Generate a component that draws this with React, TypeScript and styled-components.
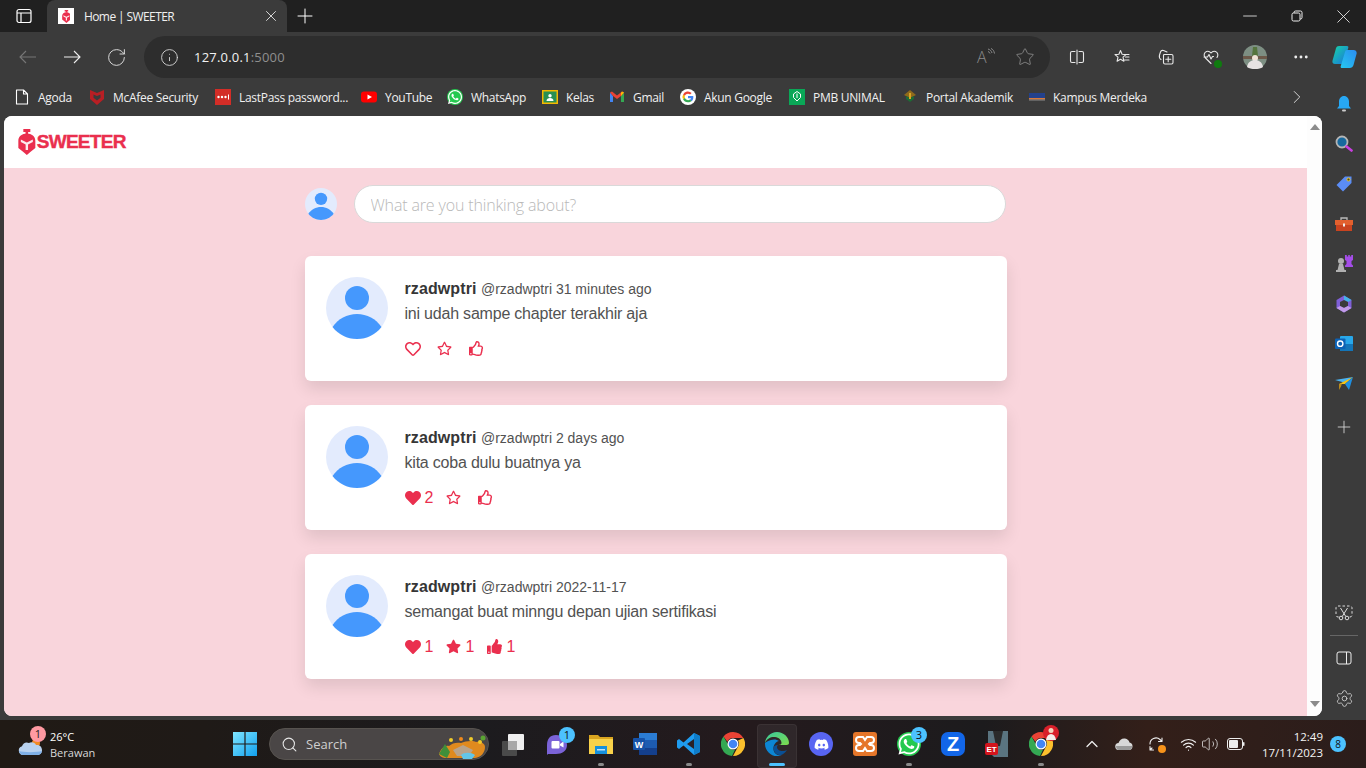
import styled, { createGlobalStyle } from "styled-components"
import {
  RotateCw, Info, Star, Plus, X, Minus, ChevronRight, ChevronUp, Search,
  Wifi, Volume2, Settings, Ellipsis,
} from "lucide-react"
import { FaHeart, FaRegHeart, FaStar, FaRegStar, FaThumbsUp, FaRegThumbsUp, FaWhatsapp, FaDiscord } from "react-icons/fa"

const RED = "#ea2f4e"

const GlobalStyle = createGlobalStyle`
  html, body { margin: 0; padding: 0; background: #3b3b3b; overflow: hidden; }
  * { box-sizing: border-box; }
`

/* ---------- drawn icons ---------- */

function Helmet({ size }: { size: number }) {
  return (
    <svg width={size * 0.68} height={size} viewBox="0 0 17 26">
      <path d="M5 0h7v3H9.800v2H7.200V3H5z" fill={RED} />
      <path d="M8.500 4.500c4.800 0 8.500 2.800 8.500 7.500v7l-5 4-3.500 3-3.500-3-5-4v-7c0-4.700 3.700-7.500 8.500-7.500z" fill={RED} />
      <path d="M2.500 10.500l6 3 6-3v2.500l-4.800 2.500V21H7.300v-5.500L2.500 13z" fill="#fff" opacity=".9" />
    </svg>
  )
}

function Avatar({ size }: { size: number }) {
  return (
    <svg width={size} height={size} viewBox="0 0 62 62">
      <circle cx="31" cy="31" r="31" fill="#e3ebfd" />
      <circle cx="31" cy="21" r="12" fill="#4598fd" />
      <path d="M6.500 50C12 42 21 37 31 37s19 5 24.500 13C49.500 57.500 41 62 31 62S12.500 57.500 6.500 50z" fill="#4598fd" />
    </svg>
  )
}

function ChromeLogo({ size }: { size: number }) {
  return (
    <svg width={size} height={size} viewBox="0 0 24 24">
      <path d="M12 0a12 12 0 0 1 10.400 6H12a6 6 0 0 0-5.600 3.800L2.500 4.600A12 12 0 0 1 12 0z" fill="#ea4335" />
      <path d="M22.400 6A12 12 0 0 1 12 24l4.700-8.700A6 6 0 0 0 17 8.400z" fill="#fbc02d" />
      <path d="M2.500 4.600l5 8.600a5 5 0 0 0 6.500 4.500L11 24A12 12 0 0 1 2.500 4.600z" fill="#34a853" />
      <circle cx="12" cy="12" r="5.500" fill="#fff" />
      <circle cx="12" cy="12" r="4.300" fill="#4285f4" />
    </svg>
  )
}

function GoogleLogo() {
  return (
    <svg width="16" height="16" viewBox="0 0 24 24">
      <circle cx="12" cy="12" r="12" fill="#fff" />
      <path d="M20 12.200c0-.6-.1-1.100-.2-1.700H12v3.200h4.500a3.900 3.900 0 0 1-1.700 2.500l2.700 2.100c1.600-1.400 2.500-3.500 2.500-6.100z" fill="#4285f4" />
      <path d="M12 20c2.200 0 4-.7 5.500-2l-2.700-2.100c-.7.500-1.700.8-2.800.8-2.100 0-3.900-1.400-4.600-3.400L4.600 15.500A8 8 0 0 0 12 20z" fill="#34a853" />
      <path d="M7.400 13.300a4.800 4.800 0 0 1 0-3L4.600 8.200a8 8 0 0 0 0 7.300z" fill="#fbbc05" />
      <path d="M12 7.200c1.200 0 2.300.4 3.100 1.200l2.400-2.400A8 8 0 0 0 4.600 8.200l2.800 2.100C8.100 8.600 9.900 7.200 12 7.200z" fill="#ea4335" />
    </svg>
  )
}

function EdgeLogo() {
  return (
    <svg width="24" height="24" viewBox="0 0 24 24">
      <defs>
        <linearGradient id="edgeA" x1="0" y1="0" x2="1" y2="1">
          <stop offset="0" stopColor="#36c9a0" />
          <stop offset="1" stopColor="#7fdc4c" />
        </linearGradient>
      </defs>
      <path d="M12 0C5.500 0 .5 5 0 11c2-5 6.500-6.500 10-6 4 .5 6.500 3 6.500 6 0 1-1 2-3 2h8c1.500 0 2.500-1 2.500-2C24 5 18.500 0 12 0z" fill="url(#edgeA)" />
      <path d="M0 11c-.3 7 5 13 12 13 2 0 3.500-.3 5-1-3.500 1-8-1-8.500-5.500C8 13 11 9.500 14 9c-2-1.500-5-2-8-1C3 9 1 10 0 11z" fill="#0c86d4" />
      <path d="M8.500 16c0 4 3 7 7 7.200 2.500-.7 5-2.700 6.500-5.500-1 .8-2.500 1.300-4.500 1.300-3 0-5.500-1.500-5.500-4 0-.8.300-1.500 1-2-2.500 0-4.500 1-4.500 3z" fill="#0a4f94" />
    </svg>
  )
}

function Copilot() {
  return (
    <svg width="25" height="24" viewBox="0 0 25 24">
      <defs>
        <linearGradient id="copA" x1="0" y1="0" x2="1" y2="1">
          <stop offset="0" stopColor="#17d6a5" />
          <stop offset="1" stopColor="#1b6fe0" />
        </linearGradient>
        <linearGradient id="copB" x1="1" y1="0" x2="0" y2="1">
          <stop offset="0" stopColor="#2b8cf0" />
          <stop offset="1" stopColor="#25c8f0" />
        </linearGradient>
      </defs>
      <path d="M7 1h8c1 0 1.600.8 1.300 1.800L12 17c-.4 1.200-1.500 2-2.800 2H3c-2 0-3-1.500-2.500-3.300L4 3.200C4.400 1.800 5.500 1 7 1z" fill="url(#copA)" />
      <path d="M15 5h6.500c2.300 0 3.700 1.800 3 4l-3 11c-.5 2-2 3-3.800 3H10c-1 0-1.600-.8-1.300-1.800L13 7c.3-1.200 1-2 2-2z" fill="url(#copB)" />
    </svg>
  )
}

function Line({ d, size = 16, color = "#e8e8e8", fill = "none" }: { d: string; size?: number; color?: string; fill?: string }) {
  return (
    <svg width={size} height={size} viewBox="0 0 16 16">
      <path d={d} fill={fill} stroke={color} strokeWidth="1.100" strokeLinejoin="round" strokeLinecap="round" />
    </svg>
  )
}

function NavArrow({ color, back }: { color: string; back?: boolean }) {
  return (
    <svg width="18" height="14" viewBox="0 0 18 14">
      <path d={back ? "M17 7H1M7 1L1 7l6 6" : "M1 7h16M11 1l6 6-6 6"} fill="none" stroke={color} strokeWidth="1.100" />
    </svg>
  )
}

function GreenBubble({ size }: { size: number }) {
  return (
    <GreenBadge $size={size}>
      <FaWhatsapp size={size} color="#fff" />
    </GreenBadge>
  )
}

const bookmarks = [
  { label: "Agoda", w: 75, icon: <Line d="M2.500 1h7l4 4v10h-11zM9.500 1v4h4" color="#fff" /> },
  {
    label: "McAfee Security", w: 126,
    icon: <svg width="16" height="16" viewBox="0 0 16 16"><path d="M1 1l7 3 7-3v9l-7 6-7-6z" fill="#b81f24" /><path d="M4.500 5.500L8 7l3.500-1.500v3.300L8 11.500 4.500 8.800z" fill="#3b3b3b" /></svg>,
  },
  {
    label: "LastPass password...", w: 146,
    icon: <svg width="16" height="16" viewBox="0 0 16 16"><rect width="16" height="16" fill="#d32d27" /><circle cx="3.500" cy="8" r="1.200" fill="#fff" /><circle cx="7" cy="8" r="1.200" fill="#fff" /><circle cx="10.500" cy="8" r="1.200" fill="#fff" /><rect x="13" y="5.500" width="1" height="5" fill="#fff" /></svg>,
  },
  {
    label: "YouTube", w: 86,
    icon: <svg width="16" height="16" viewBox="0 0 16 16"><rect y="2.500" width="16" height="11" rx="3" fill="#f00" /><path d="M6.500 5.500L11 8l-4.500 2.500z" fill="#fff" /></svg>,
  },
  { label: "WhatsApp", w: 95, icon: <GreenBubble size={16} /> },
  {
    label: "Kelas", w: 67,
    icon: <svg width="16" height="16" viewBox="0 0 16 16"><rect y="1" width="16" height="14" fill="#f5b800" /><rect x="1.500" y="2.500" width="13" height="11" fill="#2a8f52" /><circle cx="8" cy="6.800" r="1.700" fill="#fff" /><path d="M4.500 12c0-2 1.500-3 3.500-3s3.500 1 3.500 3z" fill="#fff" /></svg>,
  },
  {
    label: "Gmail", w: 71,
    icon: <svg width="16" height="16" viewBox="0 0 16 16"><path d="M1 3.500V13h3V7z" fill="#4285f4" /><path d="M15 3.500V13h-3V7z" fill="#34a853" /><path d="M1 3.500L3 2.500 8 6.500l5-4 2 1L12 7 8 10 4 7z" fill="#ea4335" /><path d="M12 3.700l1-1.200 2 1L12 7z" fill="#fbbc05" /></svg>,
  },
  { label: "Akun Google", w: 109, icon: <GoogleLogo /> },
  {
    label: "PMB UNIMAL", w: 113,
    icon: <svg width="16" height="16" viewBox="0 0 16 16"><rect width="16" height="16" fill="#0aa757" /><path d="M8 2.500l3.500 2.500v3.500L8 12 4.500 8.500V5z" fill="none" stroke="#fff" /><path d="M8 4.500v4.500" stroke="#fff" /></svg>,
  },
  {
    label: "Portal Akademik", w: 127,
    icon: <svg width="16" height="16" viewBox="0 0 16 16"><path d="M8 1l6 5-6 3-6-3z" fill="#8f6a1c" /><path d="M4 7l4 2 4-2v3l-4 3-4-3z" fill="#1e6b35" /><path d="M7 4h2v6H7z" fill="#d9a520" /></svg>,
  },
  {
    label: "Kampus Merdeka", w: 120,
    icon: <svg width="16" height="16" viewBox="0 0 16 16"><rect y="4" width="16" height="5" fill="#23418c" /><rect y="9" width="16" height="1.500" fill="#d9793a" /><rect y="10.500" width="16" height="1" fill="#8b8b8b" /></svg>,
  },
]

/* ---------- posts data ---------- */

const posts = [
  { when: "31 minutes ago", text: "ini udah sampe chapter terakhir aja", likes: 0, stars: 0, thumbs: 0 },
  { when: "2 days ago", text: "kita coba dulu buatnya ya", likes: 2, stars: 0, thumbs: 0 },
  { when: "2022-11-17", text: "semangat buat minngu depan ujian sertifikasi", likes: 1, stars: 1, thumbs: 1 },
]

function Action({ on, off, count }: { on: React.ReactNode; off: React.ReactNode; count: number }) {
  return (
    <ActionButton $hasCount={count > 0}>
      <ActionIcon>{count > 0 ? on : off}</ActionIcon>
      {count > 0 && <Count>{count}</Count>}
    </ActionButton>
  )
}

function App() {
  return (
    <Screen>
      <GlobalStyle />

      <TabStrip>
        <StripButton $w={47}>
          <svg width="16" height="16" viewBox="0 0 16 16">
            <rect x="1" y="1.500" width="14" height="13" rx="2" fill="none" stroke="#fff" strokeWidth="1.200" />
            <path d="M1 5h14M5 5v9.500" stroke="#fff" strokeWidth="1.200" fill="none" />
          </svg>
        </StripButton>
        <Tab>
          <Favicon><Helmet size={13} /></Favicon>
          <TabTitle>Home | SWEETER</TabTitle>
          <X size={18} color="#e6e6e6" strokeWidth={1.200} />
        </Tab>
        <StripButton $w={36}><Plus size={24} color="#fff" strokeWidth={1} /></StripButton>
        <WindowButtons>
          <StripButton $w={47}><Minus size={22} color="#eee" strokeWidth={0.900} /></StripButton>
          <StripButton $w={47}>
            <svg width="12" height="12" viewBox="0 0 12 12">
              <path d="M3 3V2.500A1.500 1.500 0 0 1 4.500 1h5A1.500 1.500 0 0 1 11 2.500v5A1.500 1.500 0 0 1 9.500 9H9" fill="none" stroke="#eee" />
              <rect x="1" y="3" width="8" height="8" rx="1.500" fill="none" stroke="#eee" />
            </svg>
          </StripButton>
          <StripButton $w={46}><X size={23} color="#eee" strokeWidth={0.900} /></StripButton>
        </WindowButtons>
      </TabStrip>

      <Toolbar>
        <ToolSlot><NavArrow color="#777" back /></ToolSlot>
        <ToolSlot><NavArrow color="#eee" /></ToolSlot>
        <ToolSlot><RotateCw size={21} color="#e4e4e4" strokeWidth={1.050} /></ToolSlot>
        <AddressPill>
          <Info size={19} color="#ddd" strokeWidth={1.100} />
          <Url>127.0.0.1<UrlPort>:5000</UrlPort></Url>
          <PillIcons>
            <ReadAloud>
              A
              <ReadWaves width="8" height="8" viewBox="0 0 8 8">
                <path d="M1 1c2 .5 3.500 2 4 4M1 3.500c1 .3 1.700 1 2 2M4 .5c2 .8 3 2.500 3.500 5" fill="none" stroke="#8a8a8a" />
              </ReadWaves>
            </ReadAloud>
            <Star size={20} color="#8a8a8a" strokeWidth={1.050} />
          </PillIcons>
        </AddressPill>
        <ToolGroup>
          <ToolSlot>
            <Line d="M6 2.500H3a1.500 1.500 0 0 0-1.500 1.500v8A1.500 1.500 0 0 0 3 13.500h3M10 2.500h3A1.500 1.500 0 0 1 14.500 4v8a1.500 1.500 0 0 1-1.500 1.500h-3M8 1v14" />
          </ToolSlot>
          <ToolSlot>
            <Line d="M6.500 1.500l1.600 3.700 3.900.4-3 2.600.9 4-3.400-2-3.400 2 .9-4-3-2.600 3.900-.4zM11.500 8h3.500M12.500 5.500h2.500M10.500 11h4.500" />
          </ToolSlot>
          <ToolSlot>
            <Line d="M3 10.500C1.500 9.500 1 8 1.500 6l1-3C3 1.500 4 1 5.500 1.500l3.500 1.500M6 5.500h7.500A1.500 1.500 0 0 1 15 7v6.500a1.500 1.500 0 0 1-1.500 1.500H7a1.500 1.500 0 0 1-1.500-1.500V7A1.500 1.500 0 0 1 6 5.500zM10.200 7.800v5M7.800 10.200h5" />
          </ToolSlot>
          <ToolSlot>
            <StatusWrap>
              <Line d="M8 14.500L2 8.500C.5 6.500 1 3.500 3.500 2.500c2-.8 3.500.2 4.500 1.500 1-1.300 2.500-2.300 4.500-1.500C15 3.500 15.500 6.500 14 8.500M1 8h3.500l1.500-2.500 2 4.500 1.500-2.500h1" />
              <StatusDot />
            </StatusWrap>
          </ToolSlot>
          <ToolSlot>
            <svg width="24" height="24" viewBox="0 0 24 24">
              <circle cx="12" cy="12" r="12" fill="#7d8f83" />
              <path d="M10 2h4l1 9h-6z" fill="#55753e" />
              <rect x="0" y="11" width="24" height="3" fill="#6d5a4a" />
              <circle cx="12" cy="13" r="3" fill="#f0e4d8" />
              <path d="M4 22c1-5 4-7 8-7s7 2 8 7c-2 1.500-5 2-8 2s-6-.5-8-2z" fill="#e6e2e2" />
            </svg>
          </ToolSlot>
          <MoreSlot><Ellipsis size={18} color="#eee" strokeWidth={1.800} /></MoreSlot>
        </ToolGroup>
        <CopilotSlot><Copilot /></CopilotSlot>
      </Toolbar>

      <Body>
        <MainColumn>
          <BookmarkBar>
            {bookmarks.map((b) => (
              <Bookmark key={b.label} $w={b.w}>
                <BookmarkIcon>{b.icon}</BookmarkIcon>
                <BookmarkLabel>{b.label}</BookmarkLabel>
              </Bookmark>
            ))}
            <BookmarkMore><ChevronRight size={22} color="#e0e0e0" strokeWidth={1} /></BookmarkMore>
          </BookmarkBar>

          <PageFrame>
            <Page>
              <Navbar>
                <Brand>
                  <Helmet size={26} />
                  <BrandName>SWEETER</BrandName>
                </Brand>
              </Navbar>
              <Feed>
                <FeedColumn>
                  <Composer>
                    <Avatar size={32} />
                    <ComposerInput placeholder="What are you thinking about?" />
                  </Composer>
                  {posts.map((p) => (
                    <Card key={p.when}>
                      <Avatar size={62} />
                      <CardBody>
                        <Meta>
                          <Name>rzadwptri</Name> <Small>@rzadwptri {p.when}</Small>
                        </Meta>
                        <Message>{p.text}</Message>
                        <Actions>
                          <Action on={<FaHeart size={16} />} off={<FaRegHeart size={16} />} count={p.likes} />
                          <Action on={<FaStar size={15} />} off={<FaRegStar size={15} />} count={p.stars} />
                          <Action on={<FaThumbsUp size={15} />} off={<FaRegThumbsUp size={15} />} count={p.thumbs} />
                        </Actions>
                      </CardBody>
                    </Card>
                  ))}
                </FeedColumn>
              </Feed>
            </Page>
            <Scrollbar>
              <ScrollArrow $up />
              <ScrollArrow />
            </Scrollbar>
          </PageFrame>
        </MainColumn>

        <Sidebar>
          <SideSlot>
            <svg width="18" height="18" viewBox="0 0 18 18">
              <path d="M9 1c3 0 5 2.500 5 5.500V11l2 2.500H2L4 11V6.500C4 3.500 6 1 9 1z" fill="#27a8f5" />
              <rect x="7" y="14.500" width="4" height="2" rx="1" fill="#ccc" />
            </svg>
          </SideSlot>
          <SideSlot>
            <svg width="18" height="18" viewBox="0 0 18 18">
              <circle cx="7" cy="7" r="5.500" fill="#17699e" stroke="#b5b5b5" strokeWidth="1.800" />
              <path d="M11.500 11.500l5 4" stroke="#c93fe0" strokeWidth="2.600" strokeLinecap="round" />
            </svg>
          </SideSlot>
          <SideSlot>
            <svg width="18" height="18" viewBox="0 0 18 18">
              <path d="M10 1.500h6.500V8L8 16.500 1.500 10z" fill="#5b8df5" />
              <circle cx="13.500" cy="4.500" r="1.500" fill="#4a4a2a" stroke="#f0c61a" />
            </svg>
          </SideSlot>
          <SideSlot>
            <svg width="18" height="18" viewBox="0 0 18 18">
              <path d="M6 5V3h6v2" fill="none" stroke="#bbb" strokeWidth="1.300" />
              <rect y="5" width="18" height="5" fill="#e2602e" />
              <rect x="1" y="10" width="16" height="6" fill="#c9431f" />
              <rect x="8" y="8.500" width="2" height="3" fill="#eee" />
            </svg>
          </SideSlot>
          <SideSlot>
            <svg width="18" height="18" viewBox="0 0 18 18">
              <circle cx="6" cy="6" r="3" fill="#b0b0b0" />
              <path d="M4 9h4l1.500 6H11v2H1v-2h1.500z" fill="#b0b0b0" />
              <path d="M10 0h1.800v1.500h1.400V0h1.600v1.500h1.400V0H18v5l-1.500 1v3l1.500 1.500V12h-8v-1.500L11.500 9V6L10 5z" fill="#a44de8" />
            </svg>
          </SideSlot>
          <SideSlot>
            <svg width="18" height="18" viewBox="0 0 18 18">
              <path d="M9 .5l7.500 4.500v8L9 17.500 1.500 13V5z" fill="#7f5fd8" />
              <path d="M9 .5l7.500 4.500-3.500 2L9 5z" fill="#45b2e8" />
              <path d="M5 7l4-2 4 2v4l-4 2-4-2z" fill="#3b3b3b" />
              <path d="M9 17.500L1.500 13 5 11l4 2 4-2 3.500 2z" fill="#c29be8" />
            </svg>
          </SideSlot>
          <SideSlot>
            <svg width="18" height="18" viewBox="0 0 18 18">
              <rect x="5" y="1" width="13" height="15" rx="1" fill="#28a8ea" />
              <rect x="5" y="9" width="13" height="7" fill="#1375b8" />
              <rect y="3.500" width="10.500" height="10.500" rx="1" fill="#0c62b5" />
              <circle cx="5.200" cy="8.700" r="2.700" fill="none" stroke="#fff" strokeWidth="1.400" />
            </svg>
          </SideSlot>
          <SideSlot>
            <svg width="18" height="18" viewBox="0 0 18 18">
              <path d="M0 5l18-3-9 5.500z" fill="#4ab4f2" />
              <path d="M4 9l14-7-8 7z" fill="#f5c518" />
              <path d="M10 9l8-7-4 13z" fill="#1f8fe0" />
              <path d="M4 9v6l2-3.500 1-3z" fill="#b98a1d" />
            </svg>
          </SideSlot>
          <SideSlot $mt={3}><Plus size={20} color="#ddd" strokeWidth={1} /></SideSlot>
          <SideBottom>
            <SideSlot $h={32}>
              <svg width="18" height="18" viewBox="0 0 18 18">
                <rect x="1" y="2" width="16" height="11" rx="2" fill="none" stroke="#ddd" strokeDasharray="2.500 2" />
                <path d="M5.500 4l5 8M12.500 4l-5 8" stroke="#ddd" fill="none" />
                <circle cx="6" cy="14" r="1.800" fill="#3b3b3b" stroke="#ddd" />
                <circle cx="12" cy="14" r="1.800" fill="#3b3b3b" stroke="#ddd" />
              </svg>
            </SideSlot>
            <SideDivider />
            <SideSlot $h={44}>
              <svg width="16" height="16" viewBox="0 0 16 16">
                <rect x="1" y="2" width="14" height="12" rx="2" fill="none" stroke="#eee" />
                <path d="M10.500 2v12" stroke="#eee" />
              </svg>
            </SideSlot>
            <SideSlot $h={36}><Settings size={19} color="#ddd" strokeWidth={1} /></SideSlot>
          </SideBottom>
        </Sidebar>
      </Body>

      <Taskbar>
        <Weather>
          <WeatherIcon>
            <svg width="26" height="18" viewBox="0 0 26 18">
              <circle cx="18" cy="5" r="4" fill="#f08a24" />
              <path d="M5 17a4.500 4.500 0 0 1-1-8.800C5 5 8 3.500 11 5c2-1.500 6-1 7 2 3-.5 6 1.500 6 5s-2 5-5 5z" fill="#b9d2ef" />
              <path d="M1 13c4 1.500 18 1.500 23 0-.5 2.500-2 4-5 4H5c-2.500 0-3.500-2-4-4z" fill="#7fb0e6" />
            </svg>
            <WeatherBadge>1</WeatherBadge>
          </WeatherIcon>
          <WeatherText>
            <WeatherTemp>26°C</WeatherTemp>
            <WeatherCond>Berawan</WeatherCond>
          </WeatherText>
        </Weather>

        <StartButton>
          <svg width="24" height="24" viewBox="0 0 24 24">
            <defs>
              <linearGradient id="winA" x1="0" y1="0" x2="1" y2="1">
                <stop offset="0" stopColor="#7fe6ff" />
                <stop offset="1" stopColor="#11a0ee" />
              </linearGradient>
            </defs>
            <path d="M0 0h11.400v11.400H0zM12.600 0H24v11.400H12.600zM0 12.600h11.400V24H0zM12.600 12.600H24V24H12.600z" fill="url(#winA)" />
          </svg>
        </StartButton>

        <SearchBox>
          <Search size={17} color="#e6e6e6" strokeWidth={1.500} />
          <SearchLabel>Search</SearchLabel>
          <SearchArt>
            <svg width="50" height="30" viewBox="0 0 50 30">
              <path d="M2 24c2-5 5-9 10-8 3-3 8-4 12-3 4-2 12-3 15-1 4-1 9 1 9 5 0 6-4 10-10 11H8c-3 0-6-3-6-4z" fill="#e08a1e" />
              <path d="M2 24l6-10 5 8 -3 6z" fill="#3f8f3a" />
              <path d="M16 20l10-5 10 5-4 6H20z" fill="#b9a38a" />
              <path d="M24 25c3-3 10-3 14 0l-3 4H26z" fill="#63c6e8" />
              <circle cx="14" cy="10" r="2" fill="#f0cc2a" />
              <circle cx="24" cy="9" r="2" fill="#f08a1a" />
              <circle cx="34" cy="9" r="2" fill="#f0cc2a" />
              <circle cx="43" cy="12" r="2" fill="#f0cc2a" />
              <circle cx="46" cy="8" r="2.500" fill="#5aa532" />
            </svg>
          </SearchArt>
        </SearchBox>

        <TaskIcons>
          <TaskIcon>
            <svg width="24" height="24" viewBox="0 0 24 24">
              <rect x="1" y="9" width="15" height="15" rx="1" fill="#4a4a4a" />
              <rect x="7" y="2" width="16" height="16" rx="1" fill="#efefef" />
              <rect x="7" y="9" width="9" height="9" fill="#a8a8a8" />
            </svg>
          </TaskIcon>
          <TaskIcon>
            <svg width="24" height="24" viewBox="0 0 24 24">
              <path d="M11 3c6 0 11 4 11 10s-5 9-11 9H3l-1 1V13C2 7 5 3 11 3z" fill="#7b63d8" />
              <rect x="6.500" y="9" width="8" height="7.500" rx="1" fill="#fff" />
              <path d="M15 12l3.500-2.500v6L15 13.500z" fill="#fff" />
            </svg>
            <CountBadge>1</CountBadge>
          </TaskIcon>
          <TaskIcon $open>
            <svg width="24" height="24" viewBox="0 0 24 24">
              <path d="M0 3h9l2 2h13v17H0z" fill="#d9a520" />
              <path d="M0 7h24v15H0z" fill="#f9d24a" />
              <path d="M6 14h12v8H6z" fill="#1690dc" />
              <path d="M8 17h8v1.500H8z" fill="#bfe3f8" />
            </svg>
          </TaskIcon>
          <TaskIcon>
            <svg width="24" height="24" viewBox="0 0 24 24">
              <path d="M6 1h18v22H6z" fill="#2b7cd3" />
              <path d="M6 8h18v8H6z" fill="#1d5bb0" />
              <path d="M6 16h18v7H6z" fill="#143f8c" />
              <rect y="6" width="12" height="12" rx="1" fill="#1552a8" />
              <text x="6" y="15.500" textAnchor="middle" fontSize="9" fontWeight="700" fontFamily="Liberation Sans, sans-serif" fill="#fff">W</text>
            </svg>
          </TaskIcon>
          <TaskIcon $open>
            <svg width="24" height="24" viewBox="0 0 24 24">
              <path d="M17 1l6 3v16l-6 3L6.500 13.500 2 17l-2-1.500V8.500L2 7l4.500 3.500z" fill="#1f9cf0" />
              <path d="M17 1l6 3v16l-6 3z" fill="#0e7cc9" />
              <path d="M17 7L10 12l7 5z" fill="#2b2126" />
            </svg>
          </TaskIcon>
          <TaskIcon><ChromeLogo size={24} /></TaskIcon>
          <TaskIcon $active><EdgeLogo /></TaskIcon>
          <TaskIcon>
            <DiscordDisc><FaDiscord size={15} color="#fff" /></DiscordDisc>
          </TaskIcon>
          <TaskIcon>
            <svg width="24" height="24" viewBox="0 0 24 24">
              <rect width="24" height="24" rx="3" fill="#e5762a" />
              <path d="M6 5h4l2 3 2-3h4a2.500 2.500 0 0 1 0 6h-1l-1 1 1 1h1a2.500 2.500 0 0 1 0 6h-4l-2-3-2 3H6a2.500 2.500 0 0 1 0-6h1l1-1-1-1H6a2.500 2.500 0 0 1 0-6z" fill="none" stroke="#fff" strokeWidth="2" />
            </svg>
          </TaskIcon>
          <TaskIcon $open>
            <GreenBubble size={24} />
            <CountBadge>3</CountBadge>
          </TaskIcon>
          <TaskIcon>
            <ZoomTile>Z</ZoomTile>
          </TaskIcon>
          <TaskIcon>
            <svg width="24" height="26" viewBox="0 0 24 26">
              <path d="M3 0h20v26H9L3 20z" fill="#5a7480" />
              <path d="M8 0h10l-3 15h-4z" fill="#2b2b2b" />
              <rect x="0" y="12" width="13" height="12" rx="2" fill="#d4141c" />
              <text x="6.500" y="21" textAnchor="middle" fontSize="8" fontWeight="700" fontFamily="Liberation Sans, sans-serif" fill="#fff">ET</text>
            </svg>
          </TaskIcon>
          <TaskIcon $open>
            <ChromeLogo size={24} />
            <ProfileBadge>
              <svg width="16" height="16" viewBox="0 0 16 16">
                <circle cx="8" cy="8" r="8" fill="#d8202a" />
                <circle cx="8" cy="5.500" r="2.500" fill="#f0d8c0" />
                <path d="M3 15c.5-4 2.500-6 5-6s4.500 2 5 6z" fill="#f4f0ec" />
              </svg>
            </ProfileBadge>
          </TaskIcon>
        </TaskIcons>

        <Tray>
          <TraySlot $w={32}><ChevronUp size={20} color="#eee" strokeWidth={1.500} /></TraySlot>
          <TraySlot $w={32}>
            <svg width="18" height="12" viewBox="0 0 18 12">
              <path d="M4 12a3.500 3.500 0 0 1-.5-7C4.500 2 7 0 10 .5c2.500.5 4 2 4.500 4A3.800 3.800 0 0 1 14 12z" fill="#d8d8d8" />
              <path d="M1 8h16v1c0 2-1.500 3-3 3H4C2 12 1 10 1 8z" fill="#9a9a9a" />
            </svg>
          </TraySlot>
          <TraySlot $w={36}>
            <SyncWrap>
              <Line d="M2 8a6 6 0 0 1 10-4.500L14 5.500M14 2v3.500h-3.500M2 10.500v3.500h3.500M2 14l2-2" color="#eee" />
              <SyncDot />
            </SyncWrap>
          </TraySlot>
          <TraySlot $w={24}><Wifi size={17} color="#f0f0f0" strokeWidth={1.600} /></TraySlot>
          <TraySlot $w={20}><Volume2 size={18} color="#eee" strokeWidth={1} /></TraySlot>
          <TraySlot $w={32}>
            <svg width="18" height="12" viewBox="0 0 18 12">
              <rect x=".5" y=".5" width="15" height="11" rx="2.500" fill="none" stroke="#eee" />
              <rect x="2" y="2" width="9" height="8" rx="1" fill="#eee" />
              <rect x="16" y="4" width="1.500" height="4" rx=".7" fill="#eee" />
            </svg>
          </TraySlot>
          <Clock>
            <span>12:49</span>
            <span>17/11/2023</span>
          </Clock>
          <NotifyBadge>8</NotifyBadge>
        </Tray>
      </Taskbar>
    </Screen>
  )
}

/* ---------- browser chrome ---------- */

const Screen = styled.div`
  width: 1366px;
  height: 768px;
  display: flex;
  flex-direction: column;
  overflow: hidden;
  background: #3b3b3b;
  font-family: "Open Sans", "Liberation Sans", sans-serif;
`
const TabStrip = styled.div`
  height: 32px;
  flex: none;
  display: flex;
  align-items: stretch;
  background: #202020;
`
const StripButton = styled.div<{ $w: number }>`
  width: ${(p) => p.$w}px;
  display: flex;
  align-items: center;
  justify-content: center;
`
const Tab = styled.div`
  width: 240px;
  display: flex;
  align-items: center;
  padding: 0 7px 0 11px;
  background: #3b3b3b;
  border-radius: 8px 8px 0 0;
`
const Favicon = styled.div`
  width: 16px;
  height: 16px;
  background: #fff;
  display: flex;
  align-items: center;
  justify-content: center;
`
const TabTitle = styled.div`
  flex: 1;
  margin-left: 10px;
  color: #f0f0f0;
  font-size: 12px;
  letter-spacing: -0.6px;
`
const WindowButtons = styled.div`
  margin-left: auto;
  display: flex;
`
const Toolbar = styled.div`
  height: 46px;
  flex: none;
  display: flex;
  align-items: stretch;
  padding: 4px 0 0 6px;
  background: #3b3b3b;
`
const ToolSlot = styled.div`
  width: 44px;
  display: flex;
  align-items: center;
  justify-content: center;
  flex: 1 0 44px;
`
const MoreSlot = styled(ToolSlot)`
  padding-left: 3px;
`
const AddressPill = styled.div`
  width: 906px;
  flex: none;
  margin-left: 6px;
  display: flex;
  align-items: center;
  padding: 0 15px 0 16px;
  border-radius: 21px;
  background: #2d2d2d;
`
const Url = styled.div`
  margin-left: 15px;
  color: #f2f2f2;
  font-size: 13px;
  letter-spacing: 0.2px;
`
const UrlPort = styled.span`
  color: #8f8f8f;
`
const PillIcons = styled.div`
  margin-left: auto;
  display: flex;
  align-items: center;
  gap: 21px;
`
const ReadAloud = styled.div`
  position: relative;
  width: 17px;
  color: #8a8a8a;
  font-size: 16px;
  font-weight: 300;
  line-height: 18px;
`
const ReadWaves = styled.svg`
  position: absolute;
  top: 0;
  right: -1px;
`
const ToolGroup = styled.div`
  width: 267px;
  flex: none;
  margin-left: 5px;
  display: flex;
`
const StatusWrap = styled.div`
  position: relative;
  display: flex;
`
const StatusDot = styled.div`
  position: absolute;
  right: -3px;
  bottom: -3px;
  width: 8px;
  height: 8px;
  border-radius: 50%;
  background: #0f7b0f;
`
const CopilotSlot = styled.div`
  width: 44px;
  flex: none;
  display: flex;
  align-items: center;
  justify-content: center;
`
const Body = styled.div`
  flex: 1;
  min-height: 0;
  display: flex;
`
const MainColumn = styled.div`
  width: 1322px;
  display: flex;
  flex-direction: column;
`
const BookmarkBar = styled.div`
  height: 38px;
  flex: none;
  display: flex;
  align-items: center;
  padding-left: 14px;
`
const Bookmark = styled.div<{ $w: number }>`
  width: ${(p) => p.$w}px;
  flex: none;
  display: flex;
  align-items: center;
  gap: 8px;
`
const BookmarkIcon = styled.div`
  width: 16px;
  height: 16px;
  flex: none;
  display: flex;
`
const BookmarkLabel = styled.div`
  margin-top: 1px;
  color: #f0f0f0;
  font-size: 12px;
  letter-spacing: -0.3px;
  white-space: nowrap;
`
const BookmarkMore = styled.div`
  margin-left: auto;
  margin-right: 14px;
  display: flex;
`
const GreenBadge = styled.div<{ $size: number }>`
  width: ${(p) => p.$size}px;
  height: ${(p) => p.$size}px;
  border-radius: 50%;
  background: #25c94f;
  display: flex;
  align-items: center;
  justify-content: center;
`

/* ---------- the page ---------- */

const PageFrame = styled.div`
  height: 600px;
  margin-left: 4px;
  display: flex;
  border-radius: 8px;
  overflow: hidden;
  background: #fff;
`
const Page = styled.div`
  flex: 1;
  display: flex;
  flex-direction: column;
  min-width: 0;
`
const Navbar = styled.div`
  height: 52px;
  flex: none;
  display: flex;
  align-items: center;
  padding-left: 14px;
  background: #fff;
`
const Brand = styled.div`
  display: flex;
  align-items: center;
  gap: 1px;
`
const BrandName = styled.div`
  color: ${RED};
  font-family: "Liberation Sans", Arial, sans-serif;
  font-size: 19px;
  font-weight: 700;
  letter-spacing: -0.7px;
  -webkit-text-stroke: 0.4px ${RED};
`
const Feed = styled.div`
  flex: 1;
  background: #f9d5dc;
`
const FeedColumn = styled.div`
  width: 702px;
  margin: 0 auto;
  display: flex;
  flex-direction: column;
  gap: 24px;
`
const Composer = styled.div`
  display: flex;
  align-items: center;
  gap: 17px;
  padding: 17px 1px 9px 0;
`
const ComposerInput = styled.input`
  flex: 1;
  height: 38px;
  padding: 1px 16px 0;
  border: 1px solid #d9d9d9;
  border-radius: 19px;
  background: #fff;
  outline: none;
  font-family: "Open Sans", sans-serif;
  font-weight: 300;
  font-size: 16px;
  letter-spacing: -0.15px;
  &::placeholder { color: #b8b8b8; opacity: 1; }
`
const Card = styled.div`
  height: 125px;
  display: flex;
  gap: 17px;
  padding: 21px;
  border-radius: 6px;
  background: #fff;
  box-shadow: 0 8px 16px rgba(10, 10, 10, 0.1);
  font-family: "Liberation Sans", Arial, sans-serif;
  color: #525252;
`
const CardBody = styled.div`
  flex: 1;
  min-width: 0;
`
const Meta = styled.div`
  height: 22px;
  margin-top: 1px;
  line-height: 22px;
`
const Name = styled.strong`
  color: #363636;
  font-size: 16px;
  letter-spacing: 0.1px;
`
const Small = styled.span`
  font-size: 14px;
`
const Message = styled.div`
  margin-top: 3px;
  line-height: 22px;
  font-size: 16px;
  letter-spacing: -0.21px;
`
const Actions = styled.div`
  height: 21px;
  margin-top: 13px;
  display: flex;
  align-items: center;
  color: ${RED};
`
const ActionButton = styled.div<{ $hasCount: boolean }>`
  display: flex;
  align-items: center;
  gap: 4px;
  margin-right: ${(p) => (p.$hasCount ? 12 : 16)}px;
`
const ActionIcon = styled.div`
  width: 16px;
  display: flex;
  justify-content: center;
`
const Count = styled.div`
  width: 9px;
  font-size: 16px;
  line-height: 21px;
`
const Scrollbar = styled.div`
  width: 15px;
  flex: none;
  display: flex;
  flex-direction: column;
  justify-content: space-between;
  align-items: center;
  padding: 8px 0 9px;
  background: #fdfdfd;
`
const ScrollArrow = styled.div<{ $up?: boolean }>`
  width: 0;
  height: 0;
  border-left: 5px solid transparent;
  border-right: 5px solid transparent;
  ${(p) => (p.$up ? "border-bottom: 6px solid #8b8b8b;" : "border-top: 6px solid #8b8b8b;")}
`

/* ---------- sidebar ---------- */

const Sidebar = styled.div`
  width: 44px;
  flex: none;
  display: flex;
  flex-direction: column;
  padding: 6px 0 0;
  margin-bottom: 4px;
`
const SideSlot = styled.div<{ $h?: number; $mt?: number }>`
  height: ${(p) => p.$h ?? 40}px;
  margin-top: ${(p) => p.$mt ?? 0}px;
  flex: none;
  display: flex;
  align-items: center;
  justify-content: center;
`
const SideBottom = styled.div`
  margin-top: auto;
`
const SideDivider = styled.div`
  width: 28px;
  height: 1px;
  margin: 6px auto 0;
  background: #666;
`

/* ---------- taskbar ---------- */

const Taskbar = styled.div`
  height: 48px;
  flex: none;
  display: flex;
  align-items: center;
  padding-left: 18px;
  background: linear-gradient(90deg, #201a15 0%, #1f1a17 15%, #1c1b1e 35%, #241a1d 55%, #1c1b1d 72%, #331f19 84%, #2b1d1b 100%);
`
const Weather = styled.div`
  width: 215px;
  flex: none;
  display: flex;
  align-items: center;
  gap: 6px;
`
const WeatherIcon = styled.div`
  position: relative;
  width: 26px;
  height: 18px;
  margin-top: 6px;
`
const WeatherBadge = styled.div`
  position: absolute;
  top: -12px;
  left: 12px;
  width: 16px;
  height: 16px;
  border-radius: 50%;
  background: #ff9aa2;
  color: #222;
  font-size: 11px;
  line-height: 16px;
  text-align: center;
`
const WeatherText = styled.div`
  margin-top: 2px;
  display: flex;
  flex-direction: column;
  font-size: 11px;
  line-height: 16px;
`
const WeatherTemp = styled.span`
  color: #fff;
`
const WeatherCond = styled.span`
  color: #d8d8d8;
`
const StartButton = styled.div`
  width: 36px;
  flex: none;
  display: flex;
`
const SearchBox = styled.div`
  position: relative;
  width: 220px;
  height: 32px;
  flex: none;
  display: flex;
  align-items: center;
  padding-left: 11px;
  border-radius: 16px;
  background: #4a4646;
  border: 1px solid #57534f;
`
const SearchLabel = styled.div`
  margin-left: 8px;
  color: #cfcfcf;
  font-size: 13px;
`
const SearchArt = styled.div`
  position: absolute;
  right: 1px;
  top: 1px;
  display: flex;
`
const TaskIcons = styled.div`
  margin-left: 2px;
  display: flex;
`
const TaskIcon = styled.div<{ $open?: boolean; $active?: boolean }>`
  position: relative;
  width: 44px;
  height: 48px;
  display: flex;
  align-items: center;
  justify-content: center;
  &::before {
    content: ${(p) => (p.$active ? '""' : "none")};
    position: absolute;
    inset: 4px 2px 0;
    border-radius: 4px;
    background: rgba(255, 255, 255, 0.06);
    border: 1px solid rgba(255, 255, 255, 0.05);
  }
  &::after {
    content: ${(p) => (p.$open || p.$active ? '""' : "none")};
    position: absolute;
    bottom: 2px;
    left: 50%;
    height: 3px;
    width: ${(p) => (p.$active ? 16 : 6)}px;
    margin-left: ${(p) => (p.$active ? -8 : -3)}px;
    border-radius: 2px;
    background: ${(p) => (p.$active ? "#4cc2ff" : "#8a8a8a")};
  }
  > * { position: relative; }
`
const CountBadge = styled.div`
  position: absolute !important;
  top: 7px;
  left: 24px;
  width: 16px;
  height: 16px;
  border-radius: 50%;
  background: #4cc2ff;
  color: #111;
  font-size: 11px;
  line-height: 16px;
  text-align: center;
`
const ProfileBadge = styled.div`
  position: absolute !important;
  top: 5px;
  left: 24px;
  display: flex;
`
const DiscordDisc = styled.div`
  width: 24px;
  height: 24px;
  border-radius: 50%;
  background: #5865f2;
  display: flex;
  align-items: center;
  justify-content: center;
`
const ZoomTile = styled.div`
  width: 24px;
  height: 24px;
  border-radius: 7px;
  background: #1266e8;
  color: #fff;
  font-family: "Liberation Sans", sans-serif;
  font-size: 20px;
  font-weight: 700;
  line-height: 24px;
  text-align: center;
`
const Tray = styled.div`
  margin-left: 13px;
  display: flex;
  align-items: center;
`
const TraySlot = styled.div<{ $w: number }>`
  width: ${(p) => p.$w}px;
  display: flex;
  justify-content: center;
`
const SyncWrap = styled.div`
  position: relative;
  display: flex;
  margin-right: 4px;
`
const SyncDot = styled.div`
  position: absolute;
  right: -2px;
  bottom: -1px;
  width: 8px;
  height: 8px;
  border-radius: 50%;
  background: #f7931a;
`
const Clock = styled.div`
  width: 71px;
  margin-top: 2px;
  display: flex;
  flex-direction: column;
  align-items: flex-end;
  color: #f4f4f4;
  font-size: 11.5px;
  line-height: 16px;
`
const NotifyBadge = styled.div`
  width: 16px;
  height: 16px;
  margin-left: 7px;
  border-radius: 50%;
  background: #4cc2ff;
  color: #111;
  font-size: 10px;
  line-height: 16px;
  text-align: center;
`

export default App
